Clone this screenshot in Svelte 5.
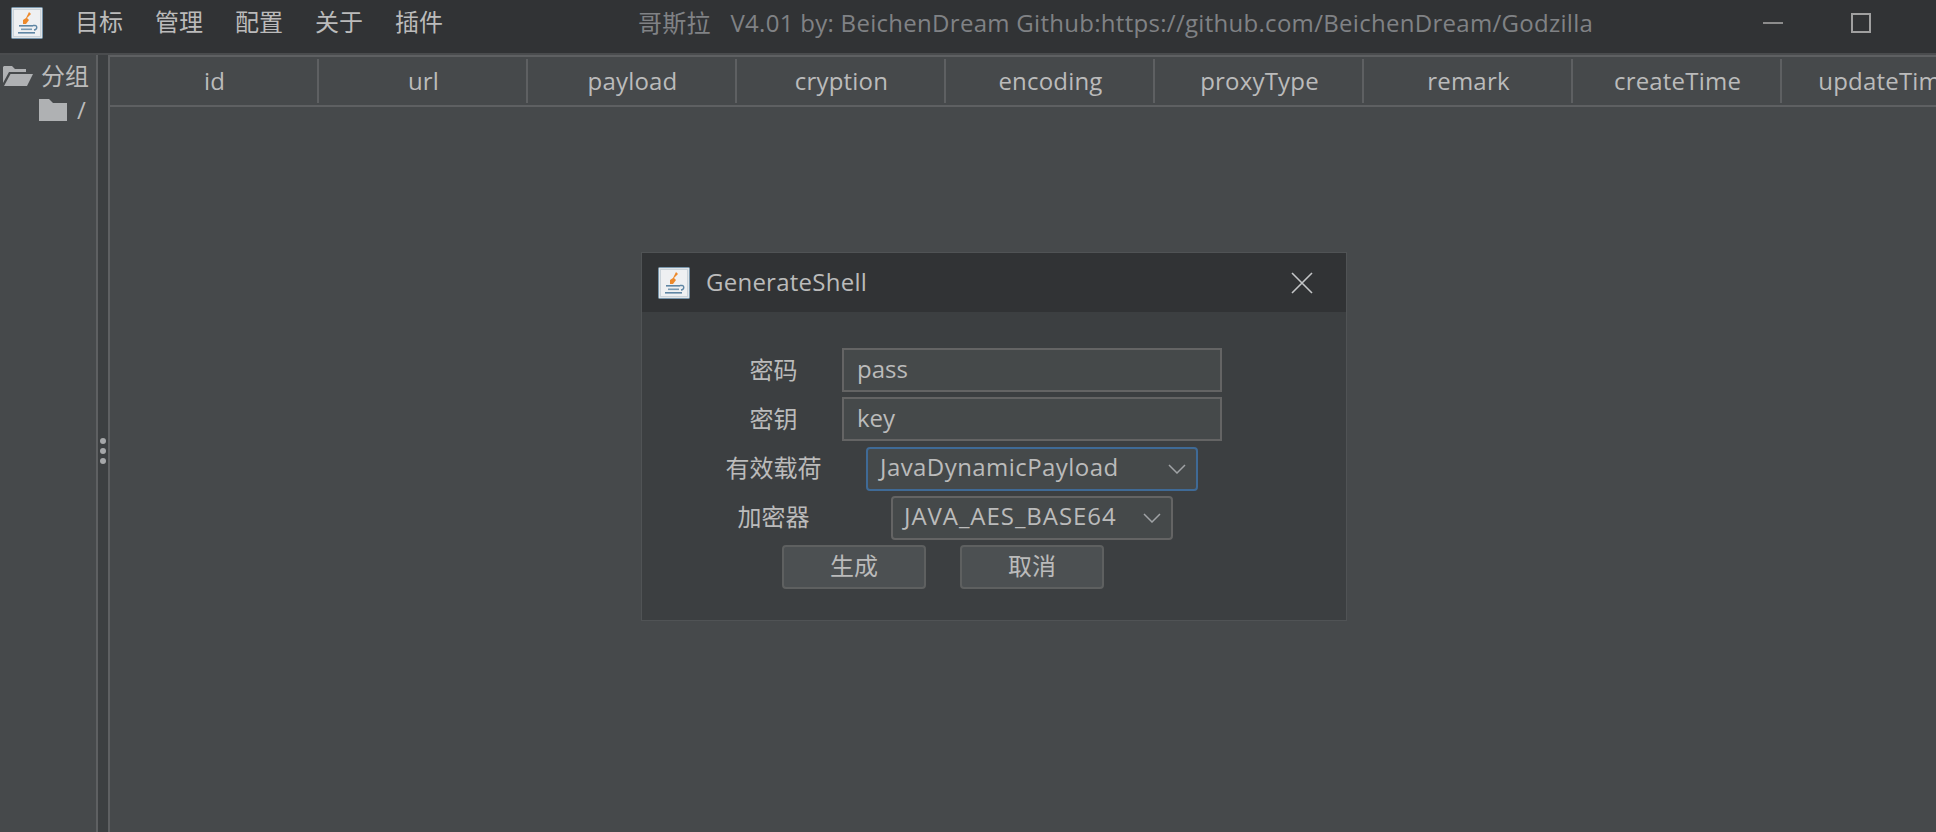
<script>
  const menus = ['目标', '管理', '配置', '关于', '插件'];
  const columns = ['id', 'url', 'payload', 'cryption', 'encoding', 'proxyType', 'remark', 'createTime', 'updateTime'];
</script>

{#snippet javaIcon()}
  <svg class="java" viewBox="0 0 32 32" width="32" height="32">
    <rect x="0.5" y="0.5" width="31" height="31" rx="1" fill="#dfe4e8" stroke="#7795ab" />
    <rect x="2.500" y="2.500" width="27" height="27" fill="#eef0f2" stroke="#c9d3da" />
    <path d="M18 5 L20 7 L16 11 L18 13 L15 17 L12 17 L12 13 L15 11 Z" fill="#ed8a2c" />
    <rect x="8" y="18" width="14" height="1.600" fill="#5f86a4" />
    <path d="M22 18.500 h2 c2.500 0 2.500 4 -1 4.500" fill="none" stroke="#5f86a4" stroke-width="1.400" />
    <rect x="10" y="21.500" width="11" height="1.600" fill="#7a9ab2" />
    <rect x="7" y="25" width="17" height="1.600" fill="#5f86a4" />
  </svg>
{/snippet}

{#snippet chevron()}
  <svg class="chevron" viewBox="0 0 18 10" width="18" height="10">
    <path d="M1 1 L9 9 L17 1" fill="none" stroke="#a0a3a6" stroke-width="1.500" />
  </svg>
{/snippet}

<div class="window">
  <header class="titlebar">
    <div class="app-icon">{@render javaIcon()}</div>
    <nav class="menu">
      {#each menus as item}
        <span>{item}</span>
      {/each}
    </nav>
    <div class="title">哥斯拉&nbsp;&nbsp; V4.01 by: BeichenDream Github:https://github.com/BeichenDream/Godzilla</div>
    <div class="controls">
      <span class="min"></span>
      <span class="max"></span>
    </div>
  </header>

  <div class="body">
    <aside class="tree">
      <div class="node root">
        <svg viewBox="0 0 30 20" width="30" height="20">
          <path d="M1 0 H9 L12 3 H23 V6 H6 L0 17 V1 Z" fill="#afb1b3" />
          <path d="M7.500 8 H30 L24 20 H1 Z" fill="#afb1b3" />
        </svg>
        <span>分组</span>
      </div>
      <div class="node leaf">
        <svg viewBox="0 0 28 22" width="28" height="22">
          <path d="M0 0 H10 L14 4 H28 V22 H0 Z" fill="#afb1b3" />
        </svg>
        <span>/</span>
      </div>
    </aside>

    <div class="splitter">
      <i></i><i></i><i></i>
    </div>

    <main class="table">
      <div class="thead">
        {#each columns as col}
          <div class="th">{col}</div>
        {/each}
      </div>
    </main>
  </div>

  <div class="dialog">
    <div class="dialog-title">
      <div class="dialog-icon">{@render javaIcon()}</div>
      <span>GenerateShell</span>
      <svg class="close" viewBox="0 0 22 22" width="22" height="22">
        <path d="M1 1 L21 21 M21 1 L1 21" stroke="#c4c6c8" stroke-width="1.600" />
      </svg>
    </div>

    <div class="dialog-body">
      <div class="form">
        <label for="pass">密码</label>
        <input id="pass" value="pass" />
        <label for="key">密钥</label>
        <input id="key" value="key" />
        <span class="label">有效载荷</span>
        <div class="select focused">
          <span class="wide-1">JavaDynamicPayload</span>
          {@render chevron()}
        </div>
        <span class="label">加密器</span>
        <div class="select narrow">
          <span class="wide-2">JAVA_AES_BASE64</span>
          {@render chevron()}
        </div>
      </div>
      <div class="buttons">
        <button>生成</button>
        <button>取消</button>
      </div>
    </div>
  </div>
</div>

<style>
  :global(body) {
    margin: 0;
    background: #46494b;
    overflow: hidden;
  }

  .window {
    position: relative;
    display: flex;
    flex-direction: column;
    width: 1936px;
    height: 832px;
    overflow: hidden;
    background: #46494b;
    color: #bbbbbb;
    font-family: "Open Sans", "Noto Sans CJK SC", sans-serif;
    font-size: 24px;
  }

  .titlebar {
    display: flex;
    align-items: center;
    flex: none;
    box-sizing: content-box;
    height: 45px;
    padding-bottom: 8px;
    background: #313335;
    border-bottom: 2px solid #4a4c4e;
  }
  .app-icon {
    display: flex;
    margin-left: 11px;
  }
  .menu {
    display: flex;
    gap: 32px;
    margin-left: 32px;
    padding-bottom: 4px;
  }
  .title {
    margin-left: 195px;
    padding-bottom: 2px;
    color: #808285;
    white-space: nowrap;
    letter-spacing: 0.290px;
  }
  .controls {
    position: absolute;
    top: 13px;
    left: 1763px;
    display: flex;
    align-items: center;
    gap: 68px;
    height: 20px;
  }
  .min {
    width: 20px;
    height: 2px;
    background: #8c8c8c;
  }
  .max {
    box-sizing: border-box;
    width: 20px;
    height: 20px;
    border: 2px solid #a0a0a0;
  }

  .body {
    display: flex;
    flex: 1;
    min-height: 0;
  }

  .tree {
    flex: none;
    box-sizing: border-box;
    width: 98px;
    border-right: 2px solid #5e6062;
    padding-top: 4px;
  }
  .node {
    display: flex;
    align-items: center;
    height: 33px;
    line-height: 32px;
  }
  .root {
    gap: 8px;
    padding-left: 3px;
  }
  .leaf {
    gap: 10px;
    margin-top: 1px;
    padding-left: 39px;
  }

  .splitter {
    display: flex;
    flex: none;
    flex-direction: column;
    align-items: center;
    justify-content: center;
    gap: 4px;
    box-sizing: border-box;
    width: 12px;
    padding-top: 14px;
    background: #3c3f41;
    border-right: 2px solid #5e6062;
  }
  .splitter i {
    width: 6px;
    height: 6px;
    border-radius: 50%;
    background: #a5a7a9;
  }

  .table {
    flex: 1;
    min-width: 0;
    overflow: hidden;
  }
  .thead {
    display: flex;
    height: 48px;
    border-top: 2px solid #5e6062;
    border-bottom: 2px solid #5e6062;
  }
  .th {
    position: relative;
    flex: none;
    box-sizing: border-box;
    width: 209px;
    line-height: 48px;
    text-align: center;
    white-space: nowrap;
    letter-spacing: 0.200px;
  }
  .th::after {
    content: "";
    position: absolute;
    top: 2px;
    bottom: 2px;
    right: 0;
    width: 2px;
    background: #5e6062;
  }

  .dialog {
    position: absolute;
    top: 252px;
    left: 641px;
    box-sizing: border-box;
    width: 706px;
    height: 369px;
    background: #3c3f41;
    border: 1px solid #505355;
  }
  .dialog-title {
    display: flex;
    align-items: center;
    height: 59px;
    background: #313335;
  }
  .dialog-icon {
    display: flex;
    margin-left: 16px;
  }
  .dialog-title span {
    margin-left: 16px;
    padding-bottom: 3px;
    letter-spacing: 0.250px;
  }
  .close {
    margin-left: auto;
    margin-right: 33px;
  }

  .dialog-body {
    padding: 36px 0 0 63px;
  }
  .form {
    display: grid;
    grid-template-columns: 137px 380px;
    grid-auto-rows: 44px;
    row-gap: 5.250px;
    align-items: center;
    justify-items: center;
  }
  .label,
  label {
    padding-bottom: 4px;
    white-space: nowrap;
  }
  input {
    box-sizing: border-box;
    width: 380px;
    height: 44px;
    padding: 0 13px 3px;
    background: #45494a;
    border: 2px solid #646464;
    color: #bbbbbb;
    font: inherit;
    outline: none;
  }
  .select {
    display: flex;
    align-items: center;
    justify-content: space-between;
    box-sizing: border-box;
    width: 332px;
    height: 44px;
    padding: 0 10px 0 12px;
    background: #45494a;
    border: 2px solid #646464;
    border-radius: 4px;
    white-space: nowrap;
  }
  .select span {
    padding-bottom: 4px;
  }
  .wide-1 {
    letter-spacing: 0.440px;
  }
  .wide-2 {
    letter-spacing: 0.950px;
  }
  .select.focused {
    border-color: #3f6a96;
  }
  .select.narrow {
    width: 282px;
    padding-left: 11px;
  }
  .chevron {
    flex: none;
  }

  .buttons {
    display: flex;
    gap: 34px;
    margin: 5px 0 0 77px;
  }
  button {
    box-sizing: border-box;
    width: 144px;
    height: 44px;
    padding: 0 0 5px;
    background: #4c5052;
    border: 2px solid #5e6060;
    border-radius: 4px;
    color: #bbbbbb;
    font: inherit;
  }
</style>
